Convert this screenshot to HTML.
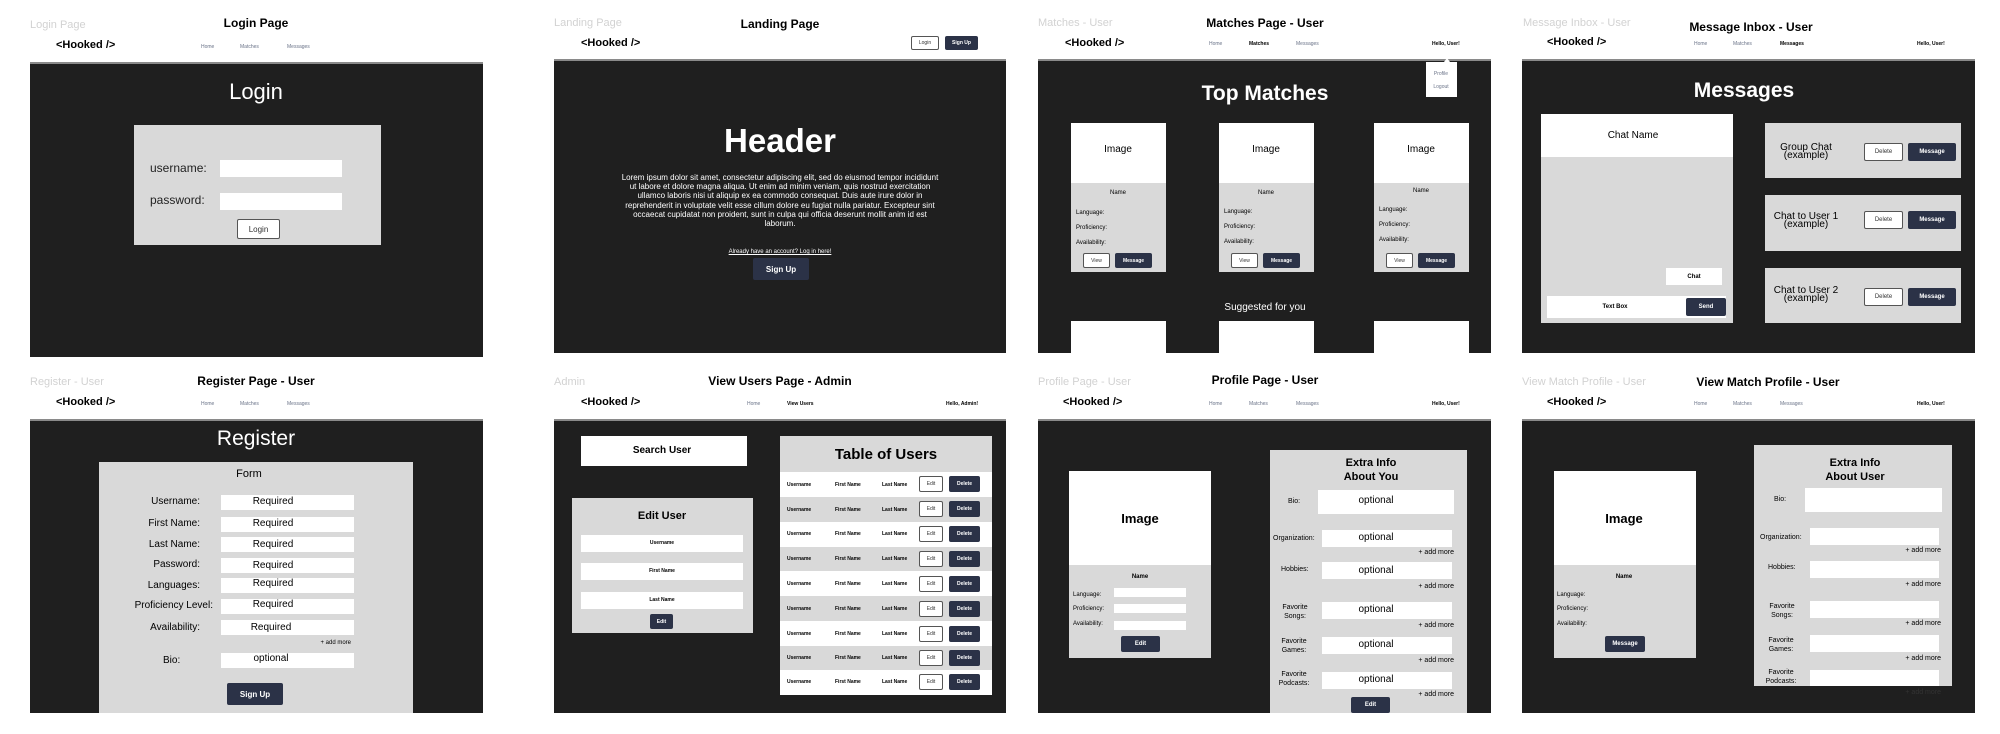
<!DOCTYPE html>
<html><head><meta charset="utf-8"><style>
body{margin:0;width:2000px;height:734px;background:#fff;position:relative;overflow:hidden;font-family:"Liberation Sans",sans-serif}
.t{position:absolute;white-space:nowrap;line-height:1;color:#000}
.c{transform:translateX(-50%)}
.b{position:absolute}
.dk{background:#1f1f1f;border-top:2px solid #8a8a8a;box-sizing:border-box}
.g{background:#d9d9d9}
.w{background:#fff}
.ghost{color:#d2d2d2;font-size:11px}
.ttl{font-weight:bold;font-size:12px}
.hk{font-weight:bold;font-size:11px}
.nav{font-size:5px;color:#6b7489}
.btn{position:absolute;background:#2b3247;color:#fff;border-radius:2px;display:flex;align-items:center;justify-content:center;font-weight:bold}
.obtn{position:absolute;background:#fff;border:1px solid #555;box-sizing:border-box;border-radius:2px;display:flex;align-items:center;justify-content:center;color:#333}
.wh{color:#fff;font-weight:bold}
</style></head><body>

<!-- PANEL 1 LOGIN -->
<div class="t ghost" style="left:30px;top:20px">Login Page</div>
<div class="t ttl c" style="left:256px;top:17px">Login Page</div>
<div class="t hk" style="left:56px;top:40px">&lt;Hooked /&gt;</div>
<div class="t nav" style="left:201px;top:45px">Home</div>
<div class="t nav" style="left:240px;top:45px">Matches</div>
<div class="t nav" style="left:287px;top:45px">Messages</div>
<div class="b dk" style="left:30px;top:62px;width:453px;height:295px"></div>
<div class="t wh c" style="left:256px;top:81px;font-size:22px;font-weight:normal">Login</div>
<div class="b g" style="left:134px;top:125px;width:247px;height:120px"></div>
<div class="t" style="left:150px;top:162px;font-size:12px;color:#222">username:</div>
<div class="b w" style="left:220px;top:160px;width:122px;height:17px"></div>
<div class="t" style="left:150px;top:194px;font-size:12px;color:#222">password:</div>
<div class="b w" style="left:220px;top:193px;width:122px;height:17px"></div>
<div class="obtn" style="left:237px;top:219px;width:43px;height:20px;font-size:8px">Login</div>

<!-- PANEL 2 LANDING -->
<div class="t ghost" style="left:554px;top:18px">Landing Page</div>
<div class="t ttl c" style="left:780px;top:18px">Landing Page</div>
<div class="t hk" style="left:581px;top:38px">&lt;Hooked /&gt;</div>
<div class="obtn" style="left:911px;top:36px;width:28px;height:14px;font-size:5px">Login</div>
<div class="btn" style="left:945px;top:36px;width:33px;height:14px;font-size:5px">Sign Up</div>
<div class="b dk" style="left:554px;top:59px;width:452px;height:294px"></div>
<div class="t wh c" style="left:780px;top:124px;font-size:33px">Header</div>
<div class="t c" style="left:780px;top:173px;width:320px;white-space:normal;text-align:center;font-size:8px;line-height:9.2px;color:#fff">Lorem ipsum dolor sit amet, consectetur adipiscing elit, sed do eiusmod tempor incididunt ut labore et dolore magna aliqua. Ut enim ad minim veniam, quis nostrud exercitation ullamco laboris nisi ut aliquip ex ea commodo consequat. Duis aute irure dolor in reprehenderit in voluptate velit esse cillum dolore eu fugiat nulla pariatur. Excepteur sint occaecat cupidatat non proident, sunt in culpa qui officia deserunt mollit anim id est laborum.</div>
<div class="t c" style="left:780px;top:249px;font-size:6px;color:#fff;text-decoration:underline">Already have an account? Log in here!</div>
<div class="btn" style="left:753px;top:258px;width:56px;height:22px;font-size:8px">Sign Up</div>

<!-- PANEL 3 MATCHES -->
<div class="t ghost" style="left:1038px;top:18px">Matches - User</div>
<div class="t ttl c" style="left:1265px;top:17px">Matches Page - User</div>
<div class="t hk" style="left:1065px;top:38px">&lt;Hooked /&gt;</div>
<div class="t nav" style="left:1209px;top:42px">Home</div>
<div class="t nav" style="left:1249px;top:42px;color:#000;font-weight:bold">Matches</div>
<div class="t nav" style="left:1296px;top:42px">Messages</div>
<div class="t nav" style="left:1432px;top:42px;color:#000;font-weight:bold">Hello, User!</div>
<div class="b dk" style="left:1038px;top:59px;width:453px;height:294px"></div>
<div class="b w" style="left:1426px;top:62px;width:31px;height:35px"></div>
<div class="b" style="left:1444px;top:58px;width:0;height:0;border-left:3px solid transparent;border-right:3px solid transparent;border-bottom:4px solid #fff"></div>
<div class="t nav c" style="left:1441px;top:72px">Profile</div>
<div class="t nav c" style="left:1441px;top:85px">Logout</div>
<div class="t wh c" style="left:1265px;top:83px;font-size:21px">Top Matches</div>

<div class="b g" style="left:1071px;top:123px;width:95px;height:149px"></div><div class="b w" style="left:1071px;top:123px;width:95px;height:60px"></div>
<div class="t c" style="left:1118px;top:145px;font-size:10px">Image</div>
<div class="t c" style="left:1118px;top:190px;font-size:6px">Name</div>
<div class="t" style="left:1076px;top:210px;font-size:6px">Language:</div>
<div class="t" style="left:1076px;top:225px;font-size:6px">Proficiency:</div>
<div class="t" style="left:1076px;top:240px;font-size:6px">Availability:</div>
<div class="obtn" style="left:1083px;top:253px;width:27px;height:15px;font-size:5px">View</div>
<div class="btn" style="left:1115px;top:253px;width:37px;height:15px;font-size:5px">Message</div>

<div class="b g" style="left:1219px;top:123px;width:95px;height:149px"></div><div class="b w" style="left:1219px;top:123px;width:95px;height:60px"></div>
<div class="t c" style="left:1266px;top:145px;font-size:10px">Image</div>
<div class="t c" style="left:1266px;top:190px;font-size:6px">Name</div>
<div class="t" style="left:1224px;top:209px;font-size:6px">Language:</div>
<div class="t" style="left:1224px;top:224px;font-size:6px">Proficiency:</div>
<div class="t" style="left:1224px;top:239px;font-size:6px">Availability:</div>
<div class="obtn" style="left:1231px;top:253px;width:27px;height:15px;font-size:5px">View</div>
<div class="btn" style="left:1263px;top:253px;width:37px;height:15px;font-size:5px">Message</div>

<div class="b g" style="left:1374px;top:123px;width:95px;height:149px"></div><div class="b w" style="left:1374px;top:123px;width:95px;height:60px"></div>
<div class="t c" style="left:1421px;top:145px;font-size:10px">Image</div>
<div class="t c" style="left:1421px;top:188px;font-size:6px">Name</div>
<div class="t" style="left:1379px;top:207px;font-size:6px">Language:</div>
<div class="t" style="left:1379px;top:222px;font-size:6px">Proficiency:</div>
<div class="t" style="left:1379px;top:237px;font-size:6px">Availability:</div>
<div class="obtn" style="left:1386px;top:253px;width:27px;height:15px;font-size:5px">View</div>
<div class="btn" style="left:1418px;top:253px;width:37px;height:15px;font-size:5px">Message</div>

<div class="t c" style="left:1265px;top:303px;font-size:10px;color:#fff">Suggested for you</div>
<div class="b w" style="left:1071px;top:321px;width:95px;height:32px"></div>
<div class="b w" style="left:1219px;top:321px;width:95px;height:32px"></div>
<div class="b w" style="left:1374px;top:321px;width:95px;height:32px"></div>

<!-- PANEL 4 MESSAGES -->
<div class="t ghost" style="left:1523px;top:18px">Message Inbox - User</div>
<div class="t ttl c" style="left:1751px;top:21px">Message Inbox - User</div>
<div class="t hk" style="left:1547px;top:37px">&lt;Hooked /&gt;</div>
<div class="t nav" style="left:1694px;top:42px">Home</div>
<div class="t nav" style="left:1733px;top:42px">Matches</div>
<div class="t nav" style="left:1780px;top:42px;color:#000;font-weight:bold">Messages</div>
<div class="t nav" style="left:1917px;top:42px;color:#000;font-weight:bold">Hello, User!</div>
<div class="b dk" style="left:1522px;top:59px;width:453px;height:294px"></div>
<div class="t wh c" style="left:1744px;top:80px;font-size:21px">Messages</div>
<div class="b g" style="left:1541px;top:114px;width:192px;height:209px"></div>
<div class="b w" style="left:1541px;top:114px;width:192px;height:43px"></div>
<div class="t c" style="left:1633px;top:131px;font-size:10px">Chat Name</div>
<div class="b w" style="left:1666px;top:268px;width:56px;height:17px"></div>
<div class="t c" style="left:1694px;top:274px;font-size:6px;font-weight:bold">Chat</div>
<div class="b w" style="left:1547px;top:296px;width:179px;height:22px"></div>
<div class="t c" style="left:1615px;top:304px;font-size:6px;font-weight:bold">Text Box</div>
<div class="btn" style="left:1686px;top:298px;width:40px;height:18px;font-size:6px">Send</div>

<div class="b g" style="left:1765px;top:123px;width:196px;height:55px"></div>
<div class="t c" style="left:1806px;top:144px;font-size:10px;line-height:8px;text-align:center">Group Chat<br>(example)</div>
<div class="obtn" style="left:1864px;top:143px;width:39px;height:18px;font-size:6px">Delete</div>
<div class="btn" style="left:1908px;top:143px;width:48px;height:18px;font-size:6px">Message</div>
<div class="b g" style="left:1765px;top:195px;width:196px;height:56px"></div>
<div class="t c" style="left:1806px;top:213px;font-size:10px;line-height:8px;text-align:center">Chat to User 1<br>(example)</div>
<div class="obtn" style="left:1864px;top:211px;width:39px;height:18px;font-size:6px">Delete</div>
<div class="btn" style="left:1908px;top:211px;width:48px;height:18px;font-size:6px">Message</div>
<div class="b g" style="left:1765px;top:268px;width:196px;height:55px"></div>
<div class="t c" style="left:1806px;top:287px;font-size:10px;line-height:8px;text-align:center">Chat to User 2<br>(example)</div>
<div class="obtn" style="left:1864px;top:288px;width:39px;height:18px;font-size:6px">Delete</div>
<div class="btn" style="left:1908px;top:288px;width:48px;height:18px;font-size:6px">Message</div>

<!-- PANEL 5 REGISTER -->
<div class="t ghost" style="left:30px;top:377px">Register - User</div>
<div class="t ttl c" style="left:256px;top:375px">Register Page - User</div>
<div class="t hk" style="left:56px;top:397px">&lt;Hooked /&gt;</div>
<div class="t nav" style="left:201px;top:402px">Home</div>
<div class="t nav" style="left:240px;top:402px">Matches</div>
<div class="t nav" style="left:287px;top:402px">Messages</div>
<div class="b dk" style="left:30px;top:419px;width:453px;height:294px"></div>
<div class="t wh c" style="left:256px;top:428px;font-size:21px;font-weight:normal">Register</div>
<div class="b g" style="left:99px;top:462px;width:314px;height:251px"></div>
<div class="t c" style="left:249px;top:469px;font-size:11px">Form</div>
<div class="t" style="right:1800px;top:497px;font-size:10px">Username:</div>
<div class="b w" style="left:221px;top:495px;width:133px;height:15px"></div><div class="t c" style="left:273px;top:497px;font-size:10px">Required</div>
<div class="t" style="right:1800px;top:519px;font-size:10px">First Name:</div>
<div class="b w" style="left:221px;top:517px;width:133px;height:15px"></div><div class="t c" style="left:273px;top:519px;font-size:10px">Required</div>
<div class="t" style="right:1800px;top:540px;font-size:10px">Last Name:</div>
<div class="b w" style="left:221px;top:537px;width:133px;height:15px"></div><div class="t c" style="left:273px;top:540px;font-size:10px">Required</div>
<div class="t" style="right:1800px;top:560px;font-size:10px">Password:</div>
<div class="b w" style="left:221px;top:558px;width:133px;height:15px"></div><div class="t c" style="left:273px;top:561px;font-size:10px">Required</div>
<div class="t" style="right:1800px;top:581px;font-size:10px">Languages:</div>
<div class="b w" style="left:221px;top:578px;width:133px;height:15px"></div><div class="t c" style="left:273px;top:579px;font-size:10px">Required</div>
<div class="t" style="right:1787px;top:601px;font-size:10px">Proficiency Level:</div>
<div class="b w" style="left:221px;top:599px;width:133px;height:15px"></div><div class="t c" style="left:273px;top:600px;font-size:10px">Required</div>
<div class="t" style="right:1800px;top:623px;font-size:10px">Availability:</div>
<div class="b w" style="left:221px;top:620px;width:133px;height:15px"></div><div class="t c" style="left:271px;top:623px;font-size:10px">Required</div>
<div class="t" style="right:1649px;top:640px;font-size:6px">+ add more</div>
<div class="t" style="left:163px;top:656px;font-size:10px">Bio:</div>
<div class="b w" style="left:221px;top:653px;width:133px;height:15px"></div><div class="t c" style="left:271px;top:654px;font-size:10px">optional</div>
<div class="btn" style="left:227px;top:683px;width:56px;height:22px;font-size:8px">Sign Up</div>

<!-- PANEL 6 ADMIN -->
<div class="t ghost" style="left:554px;top:377px">Admin</div>
<div class="t ttl c" style="left:780px;top:375px">View Users Page - Admin</div>
<div class="t hk" style="left:581px;top:397px">&lt;Hooked /&gt;</div>
<div class="t nav" style="left:747px;top:402px">Home</div>
<div class="t nav" style="left:787px;top:402px;color:#000;font-weight:bold">View Users</div>
<div class="t nav" style="left:946px;top:402px;color:#000;font-weight:bold">Hello, Admin!</div>
<div class="b dk" style="left:554px;top:419px;width:452px;height:294px"></div>
<div class="b w" style="left:581px;top:436px;width:166px;height:30px"></div>
<div class="t c" style="left:662px;top:446px;font-size:10px;font-weight:bold">Search User</div>
<div class="b g" style="left:572px;top:498px;width:181px;height:135px"></div>
<div class="t c" style="left:662px;top:511px;font-size:11px;font-weight:bold">Edit User</div>
<div class="b w" style="left:581px;top:535px;width:162px;height:17px"></div><div class="t c" style="left:662px;top:541px;font-size:5px;font-weight:bold">Username</div>
<div class="b w" style="left:581px;top:563px;width:162px;height:17px"></div><div class="t c" style="left:662px;top:569px;font-size:5px;font-weight:bold">First Name</div>
<div class="b w" style="left:581px;top:592px;width:162px;height:17px"></div><div class="t c" style="left:662px;top:598px;font-size:5px;font-weight:bold">Last Name</div>
<div class="btn" style="left:650px;top:614px;width:23px;height:15px;font-size:5px">Edit</div>
<div class="b g" style="left:780px;top:436px;width:212px;height:259px"></div>
<div class="t c" style="left:886px;top:447px;font-size:15px;font-weight:bold">Table of Users</div>

<div class="b w" style="left:780px;top:472px;width:212px;height:25px"></div>
<div class="t" style="left:787px;top:483px;font-size:5px;font-weight:bold">Username</div><div class="t" style="left:835px;top:483px;font-size:5px;font-weight:bold">First Name</div><div class="t" style="left:882px;top:483px;font-size:5px;font-weight:bold">Last Name</div>
<div class="obtn" style="left:919px;top:476px;width:24px;height:16px;font-size:5px">Edit</div><div class="btn" style="left:949px;top:476px;width:31px;height:16px;font-size:5px">Delete</div>

<div class="t" style="left:787px;top:508px;font-size:5px;font-weight:bold">Username</div><div class="t" style="left:835px;top:508px;font-size:5px;font-weight:bold">First Name</div><div class="t" style="left:882px;top:508px;font-size:5px;font-weight:bold">Last Name</div>
<div class="obtn" style="left:919px;top:501px;width:24px;height:16px;font-size:5px">Edit</div><div class="btn" style="left:949px;top:501px;width:31px;height:16px;font-size:5px">Delete</div>

<div class="b w" style="left:780px;top:522px;width:212px;height:25px"></div>
<div class="t" style="left:787px;top:532px;font-size:5px;font-weight:bold">Username</div><div class="t" style="left:835px;top:532px;font-size:5px;font-weight:bold">First Name</div><div class="t" style="left:882px;top:532px;font-size:5px;font-weight:bold">Last Name</div>
<div class="obtn" style="left:919px;top:526px;width:24px;height:16px;font-size:5px">Edit</div><div class="btn" style="left:949px;top:526px;width:31px;height:16px;font-size:5px">Delete</div>

<div class="t" style="left:787px;top:557px;font-size:5px;font-weight:bold">Username</div><div class="t" style="left:835px;top:557px;font-size:5px;font-weight:bold">First Name</div><div class="t" style="left:882px;top:557px;font-size:5px;font-weight:bold">Last Name</div>
<div class="obtn" style="left:919px;top:551px;width:24px;height:16px;font-size:5px">Edit</div><div class="btn" style="left:949px;top:551px;width:31px;height:16px;font-size:5px">Delete</div>

<div class="b w" style="left:780px;top:571px;width:212px;height:25px"></div>
<div class="t" style="left:787px;top:582px;font-size:5px;font-weight:bold">Username</div><div class="t" style="left:835px;top:582px;font-size:5px;font-weight:bold">First Name</div><div class="t" style="left:882px;top:582px;font-size:5px;font-weight:bold">Last Name</div>
<div class="obtn" style="left:919px;top:576px;width:24px;height:16px;font-size:5px">Edit</div><div class="btn" style="left:949px;top:576px;width:31px;height:16px;font-size:5px">Delete</div>

<div class="t" style="left:787px;top:607px;font-size:5px;font-weight:bold">Username</div><div class="t" style="left:835px;top:607px;font-size:5px;font-weight:bold">First Name</div><div class="t" style="left:882px;top:607px;font-size:5px;font-weight:bold">Last Name</div>
<div class="obtn" style="left:919px;top:601px;width:24px;height:16px;font-size:5px">Edit</div><div class="btn" style="left:949px;top:601px;width:31px;height:16px;font-size:5px">Delete</div>

<div class="b w" style="left:780px;top:621px;width:212px;height:25px"></div>
<div class="t" style="left:787px;top:632px;font-size:5px;font-weight:bold">Username</div><div class="t" style="left:835px;top:632px;font-size:5px;font-weight:bold">First Name</div><div class="t" style="left:882px;top:632px;font-size:5px;font-weight:bold">Last Name</div>
<div class="obtn" style="left:919px;top:626px;width:24px;height:16px;font-size:5px">Edit</div><div class="btn" style="left:949px;top:626px;width:31px;height:16px;font-size:5px">Delete</div>

<div class="t" style="left:787px;top:656px;font-size:5px;font-weight:bold">Username</div><div class="t" style="left:835px;top:656px;font-size:5px;font-weight:bold">First Name</div><div class="t" style="left:882px;top:656px;font-size:5px;font-weight:bold">Last Name</div>
<div class="obtn" style="left:919px;top:650px;width:24px;height:16px;font-size:5px">Edit</div><div class="btn" style="left:949px;top:650px;width:31px;height:16px;font-size:5px">Delete</div>

<div class="b w" style="left:780px;top:670px;width:212px;height:25px"></div>
<div class="t" style="left:787px;top:680px;font-size:5px;font-weight:bold">Username</div><div class="t" style="left:835px;top:680px;font-size:5px;font-weight:bold">First Name</div><div class="t" style="left:882px;top:680px;font-size:5px;font-weight:bold">Last Name</div>
<div class="obtn" style="left:919px;top:674px;width:24px;height:16px;font-size:5px">Edit</div><div class="btn" style="left:949px;top:674px;width:31px;height:16px;font-size:5px">Delete</div>

<!-- PANEL 7 PROFILE -->
<div class="t ghost" style="left:1038px;top:377px">Profile Page - User</div>
<div class="t ttl c" style="left:1265px;top:374px">Profile Page - User</div>
<div class="t hk" style="left:1063px;top:397px">&lt;Hooked /&gt;</div>
<div class="t nav" style="left:1209px;top:402px">Home</div>
<div class="t nav" style="left:1249px;top:402px">Matches</div>
<div class="t nav" style="left:1296px;top:402px">Messages</div>
<div class="t nav" style="left:1432px;top:402px;color:#000;font-weight:bold">Hello, User!</div>
<div class="b dk" style="left:1038px;top:419px;width:453px;height:294px"></div>
<div class="b g" style="left:1069px;top:471px;width:142px;height:187px"></div>
<div class="b w" style="left:1069px;top:471px;width:142px;height:94px"></div>
<div class="t c" style="left:1140px;top:512px;font-size:13px;font-weight:bold">Image</div>
<div class="t c" style="left:1140px;top:574px;font-size:6px;font-weight:bold">Name</div>
<div class="t" style="left:1073px;top:592px;font-size:6px">Language:</div><div class="b w" style="left:1114px;top:588px;width:72px;height:9px"></div>
<div class="t" style="left:1073px;top:606px;font-size:6px">Proficiency:</div><div class="b w" style="left:1114px;top:604px;width:72px;height:9px"></div>
<div class="t" style="left:1073px;top:621px;font-size:6px">Availability:</div><div class="b w" style="left:1114px;top:621px;width:72px;height:9px"></div>
<div class="btn" style="left:1121px;top:636px;width:39px;height:16px;font-size:6px">Edit</div>
<div class="b g" style="left:1270px;top:450px;width:197px;height:263px"></div>
<div class="t c" style="left:1371px;top:456px;font-size:11px;font-weight:bold;text-align:center;line-height:14px">Extra Info<br>About You</div>
<div class="t" style="left:1288px;top:498px;font-size:7px">Bio:</div>
<div class="b w" style="left:1318px;top:490px;width:136px;height:24px"></div><div class="t c" style="left:1376px;top:496px;font-size:10px">optional</div>
<div class="t" style="left:1273px;top:535px;font-size:7px">Organization:</div>
<div class="b w" style="left:1322px;top:530px;width:130px;height:17px"></div><div class="t c" style="left:1376px;top:533px;font-size:10px">optional</div>
<div class="t" style="right:546px;top:549px;font-size:7px">+ add more</div>
<div class="t" style="left:1281px;top:566px;font-size:7px">Hobbies:</div>
<div class="b w" style="left:1322px;top:562px;width:130px;height:17px"></div><div class="t c" style="left:1376px;top:566px;font-size:10px">optional</div>
<div class="t" style="right:546px;top:583px;font-size:7px">+ add more</div>
<div class="t c" style="left:1295px;top:603px;font-size:7px;text-align:center;line-height:9px">Favorite<br>Songs:</div>
<div class="b w" style="left:1322px;top:602px;width:130px;height:17px"></div><div class="t c" style="left:1376px;top:605px;font-size:10px">optional</div>
<div class="t" style="right:546px;top:622px;font-size:7px">+ add more</div>
<div class="t c" style="left:1294px;top:637px;font-size:7px;text-align:center;line-height:9px">Favorite<br>Games:</div>
<div class="b w" style="left:1322px;top:637px;width:130px;height:17px"></div><div class="t c" style="left:1376px;top:640px;font-size:10px">optional</div>
<div class="t" style="right:546px;top:657px;font-size:7px">+ add more</div>
<div class="t c" style="left:1294px;top:670px;font-size:7px;text-align:center;line-height:9px">Favorite<br>Podcasts:</div>
<div class="b w" style="left:1322px;top:672px;width:130px;height:17px"></div><div class="t c" style="left:1376px;top:675px;font-size:10px">optional</div>
<div class="t" style="right:546px;top:691px;font-size:7px">+ add more</div>
<div class="btn" style="left:1351px;top:697px;width:39px;height:16px;font-size:6px">Edit</div>

<!-- PANEL 8 VIEW MATCH -->
<div class="t ghost" style="left:1522px;top:377px">View Match Profile - User</div>
<div class="t ttl c" style="left:1768px;top:376px">View Match Profile - User</div>
<div class="t hk" style="left:1547px;top:397px">&lt;Hooked /&gt;</div>
<div class="t nav" style="left:1694px;top:402px">Home</div>
<div class="t nav" style="left:1733px;top:402px">Matches</div>
<div class="t nav" style="left:1780px;top:402px">Messages</div>
<div class="t nav" style="left:1917px;top:402px;color:#000;font-weight:bold">Hello, User!</div>
<div class="b dk" style="left:1522px;top:419px;width:453px;height:294px"></div>
<div class="b g" style="left:1554px;top:471px;width:142px;height:187px"></div>
<div class="b w" style="left:1554px;top:471px;width:142px;height:94px"></div>
<div class="t c" style="left:1624px;top:512px;font-size:13px;font-weight:bold">Image</div>
<div class="t c" style="left:1624px;top:574px;font-size:6px;font-weight:bold">Name</div>
<div class="t" style="left:1557px;top:592px;font-size:6px">Language:</div>
<div class="t" style="left:1557px;top:606px;font-size:6px">Proficiency:</div>
<div class="t" style="left:1557px;top:621px;font-size:6px">Availability:</div>
<div class="btn" style="left:1605px;top:636px;width:40px;height:16px;font-size:6px">Message</div>
<div class="b g" style="left:1754px;top:445px;width:198px;height:241px"></div>
<div class="t c" style="left:1855px;top:456px;font-size:11px;font-weight:bold;text-align:center;line-height:14px">Extra Info<br>About User</div>
<div class="t" style="left:1774px;top:496px;font-size:7px">Bio:</div>
<div class="b w" style="left:1805px;top:488px;width:137px;height:24px"></div>
<div class="t" style="left:1760px;top:534px;font-size:7px">Organization:</div>
<div class="b w" style="left:1810px;top:528px;width:129px;height:17px"></div>
<div class="t" style="right:59px;top:547px;font-size:7px">+ add more</div>
<div class="t" style="left:1768px;top:564px;font-size:7px">Hobbies:</div>
<div class="b w" style="left:1810px;top:561px;width:129px;height:17px"></div>
<div class="t" style="right:59px;top:581px;font-size:7px">+ add more</div>
<div class="t c" style="left:1782px;top:602px;font-size:7px;text-align:center;line-height:9px">Favorite<br>Songs:</div>
<div class="b w" style="left:1810px;top:601px;width:129px;height:17px"></div>
<div class="t" style="right:59px;top:620px;font-size:7px">+ add more</div>
<div class="t c" style="left:1781px;top:636px;font-size:7px;text-align:center;line-height:9px">Favorite<br>Games:</div>
<div class="b w" style="left:1810px;top:635px;width:129px;height:17px"></div>
<div class="t" style="right:59px;top:655px;font-size:7px">+ add more</div>
<div class="t c" style="left:1781px;top:668px;font-size:7px;text-align:center;line-height:9px">Favorite<br>Podcasts:</div>
<div class="b w" style="left:1810px;top:670px;width:129px;height:16px"></div>
<div class="t" style="right:59px;top:689px;font-size:7px;color:#333">+ add more</div>

</body></html>
